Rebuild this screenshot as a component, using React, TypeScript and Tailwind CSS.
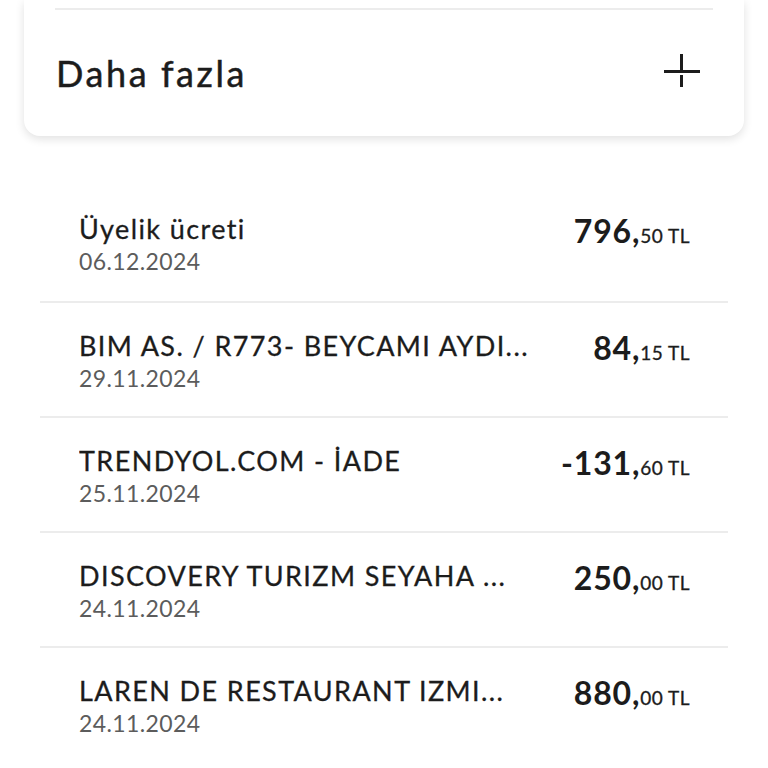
import React from 'react';

type Tx = { title: string; date: string; whole: string; cents: string };

const transactions: Tx[] = [
  { title: 'Üyelik ücreti', date: '06.12.2024', whole: '796', cents: '50' },
  { title: 'BIM AS. / R773- BEYCAMI AYDI...', date: '29.11.2024', whole: '84', cents: '15' },
  { title: 'TRENDYOL.COM - İADE', date: '25.11.2024', whole: '-131', cents: '60' },
  { title: 'DISCOVERY TURIZM SEYAHA ...', date: '24.11.2024', whole: '250', cents: '00' },
  { title: 'LAREN DE RESTAURANT IZMI...', date: '24.11.2024', whole: '880', cents: '00' },
];

function PlusIcon() {
  return (
    <svg width="40" height="40" viewBox="0 0 40 40" className="text-[#1c1c1c]">
      <path d="M2 18.5H38" stroke="currentColor" strokeWidth="3" />
      <path d="M19.5 1V17" stroke="currentColor" strokeWidth="3" />
      <path d="M19.5 22V34" stroke="currentColor" strokeWidth="3" />
    </svg>
  );
}

export default function App() {
  return (
    <div className="min-h-[768px] bg-white font-['Lato','Noto_Sans',sans-serif] text-[#1c1c1c]">
      {/* Card with expandable section */}
      <div className="mx-6 rounded-b-2xl bg-white pt-2 shadow-[0_3px_10px_rgba(0,0,0,0.12)]">
        <div className="mx-[31px] border-t-2 border-[#ececec]" />
        <div className="flex h-[126px] items-center justify-between pl-8 pr-[42px]">
          <span className="text-[36px] tracking-[2.6px] [-webkit-text-stroke:0.5px_#1c1c1c]">Daha fazla</span>
          <PlusIcon />
        </div>
      </div>

      {/* Transaction list */}
      <div className="mx-10 mt-[50px]">
        {transactions.map((t, i) => (
          <div
            key={i}
            className={`flex h-[115px] items-start justify-between pl-[39px] pr-[38px] pt-[26px] ${
              i === 0 ? '' : 'border-t-2 border-[#ececec]'
            }`}
          >
            <div className="flex min-w-0 flex-col">
              <span className="truncate text-[27px] leading-[34px] tracking-[1.4px] [-webkit-text-stroke:0.3px_#1c1c1c]">
                {t.title}
              </span>
              <span className="text-[23px] leading-[30px] tracking-[0.4px] text-[#5c5c5c]">{t.date}</span>
            </div>
            <div className="flex shrink-0 items-baseline pl-6 leading-[38px]">
              <span className="text-[32px] font-bold tracking-[0.8px]">{t.whole},</span>
              <span className="text-[19px] tracking-[0.5px] [-webkit-text-stroke:0.3px_#1c1c1c]">{t.cents} TL</span>
            </div>
          </div>
        ))}
      </div>
    </div>
  );
}
